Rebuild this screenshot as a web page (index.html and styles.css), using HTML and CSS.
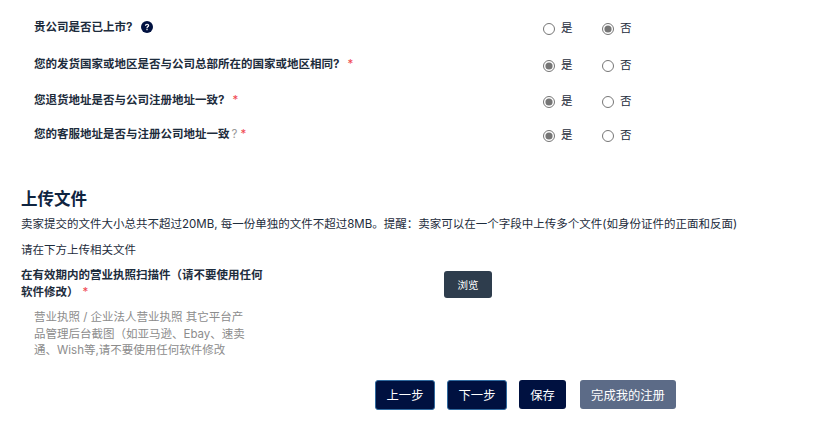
FILE: index.html
```html
<!DOCTYPE html>
<html lang="zh-CN">
<head>
	<meta charset="UTF-8">
	<title>上传文件</title>
	<link rel="stylesheet" href="styles.css">
</head>
<body>
	<form class="form">
		<div class="questions">
			<div class="question">
				<div class="question__label">贵公司是否已上市?<svg class="help" viewBox="0 0 12 12" width="12" height="12">
						<circle cx="6" cy="6" r="6" fill="#001140"/>
						<path d="M3.9 4.7c0-1.3 1-2 2.2-2s2.1.7 2.1 1.8c0 1.5-1.6 1.5-1.6 2.7H5.4c0-1.8 1.5-1.8 1.5-2.6 0-.4-.3-.8-.8-.8s-.9.4-.9.9z" fill="#fff"/>
						<rect x="5.4" y="7.9" width="1.2" height="1.3" fill="#fff"/>
					</svg></div>
				<label class="choice"><input class="choice__input" type="radio" name="q1"> 是</label>
				<label class="choice"><input class="choice__input" type="radio" name="q1" checked> 否</label>
			</div>
			<div class="question question--second">
				<div class="question__label">您的发货国家或地区是否与公司总部所在的国家或地区相同?<span class="req req--gap">*</span></div>
				<label class="choice"><input class="choice__input" type="radio" name="q2" checked> 是</label>
				<label class="choice"><input class="choice__input" type="radio" name="q2"> 否</label>
			</div>
			<div class="question question--third">
				<div class="question__label">您退货地址是否与公司注册地址一致?<span class="req req--gap">*</span></div>
				<label class="choice"><input class="choice__input" type="radio" name="q3" checked> 是</label>
				<label class="choice"><input class="choice__input" type="radio" name="q3"> 否</label>
			</div>
			<div class="question question--fourth">
				<div class="question__label">您的客服地址是否与注册公司地址一致<span class="hint">?</span><span class="req">*</span></div>
				<label class="choice"><input class="choice__input" type="radio" name="q4" checked> 是</label>
				<label class="choice"><input class="choice__input" type="radio" name="q4"> 否</label>
			</div>
		</div>

		<h2 class="title">上传文件</h2>
		<p class="note">卖家提交的文件大小总共不超过20MB, 每一份单独的文件不超过8MB。提醒：卖家可以在一个字段中上传多个文件(如身份证件的正面和反面)</p>
		<p class="note note--second">请在下方上传相关文件</p>

		<div class="upload">
			<div class="upload__info">
				<div class="upload__label">在有效期内的营业执照扫描件（请不要使用任何软件修改）<span class="req req--label">*</span></div>
				<div class="upload__desc">营业执照 / 企业法人营业执照 其它平台产品管理后台截图（如亚马逊、Ebay、速卖通、Wish等,请不要使用任何软件修改</div>
			</div>
			<button class="button button--browse" type="button">浏览</button>
		</div>

		<div class="actions">
			<button class="button button--step" type="button">上一步</button>
			<button class="button button--step" type="button">下一步</button>
			<button class="button button--save" type="button">保存</button>
			<button class="button button--finish" type="button">完成我的注册</button>
		</div>
	</form>
</body>
</html>
```

FILE: styles.css
```css
* {
	box-sizing: border-box;
}

body {
	margin: 0;
	background: #fff;
	color: #1d2c3c;
	font-family: Inter, "Noto Sans CJK SC", sans-serif;
	font-size: 11.5px;
	line-height: 17px;
}

.form {
	padding: 19px 0 0 21px;
}

.question {
	display: flex;
	align-items: center;
	height: 18px;
	padding-left: 13px;
}
.question--second { margin-top: 19px; }
.question--third { margin-top: 18px; }
.question--fourth { margin-top: 16px; }

.question__label {
	width: 509px;
	margin-top: -2px;
	font-weight: 700;
}
.question--second .question__label {
	margin-top: -1px;
}

.help {
	margin-left: 9px;
	vertical-align: -2px;
}

.req {
	color: #f0494f;
	font-weight: 400;
}
.req--gap {
	margin-left: 8px;
}
.hint {
	margin-left: 2px;
	margin-right: 3px;
	color: #999;
	font-weight: 400;
}

.choice {
	display: flex;
	align-items: center;
	gap: 6px;
	width: 59px;
}
.choice__input {
	width: 12px;
	height: 12px;
	margin: 2px 0 0;
	accent-color: #757575;
}

.title {
	margin: 43px 0 0;
	font-size: 16.5px;
	line-height: 24px;
	font-weight: 700;
	color: #0f2440;
}

.note {
	margin: 5px 0 0;
}
.note--second {
	margin-top: 9px;
}

.upload {
	display: flex;
	align-items: flex-start;
	margin-top: 8px;
}
.upload__info {
	width: 423px;
}
.upload__label {
	width: 244px;
	font-weight: 700;
}
.req--label {
	margin-left: 4px;
}
.upload__desc {
	width: 220px;
	margin: 8px 0 0 13px;
	color: #8c8c8c;
	line-height: 16.5px;
}

.button {
	border: 0;
	border-radius: 3px;
	color: #fff;
	font-family: inherit;
	font-size: 12.3px;
	cursor: pointer;
	padding: 0;
}
.button--browse {
	width: 48px;
	height: 27px;
	margin-top: 4px;
	font-size: 10.5px;
	background: #2e3d4d;
}
.button--step {
	width: 60px;
	height: 30px;
	background: #001140;
	border: 1px solid #2f6a9f;
}
.button--save {
	width: 47px;
	height: 29px;
	background: #001140;
}
.button--finish {
	width: 96px;
	height: 29px;
	margin-left: 2px;
	background: #5c6b87;
}

.actions {
	display: flex;
	align-items: center;
	gap: 12px;
	margin: 21px 0 0 354px;
}
```
